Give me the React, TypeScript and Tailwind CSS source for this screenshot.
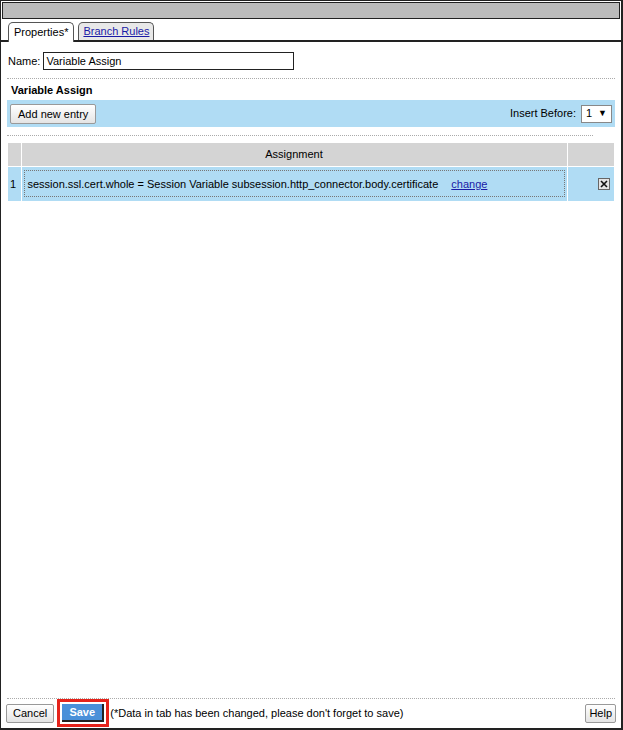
import React from "react";

const font = "font-['Liberation_Sans',Arial,sans-serif]";

const Tabs = () => (
  <div className="flex items-end pl-[4px] pr-[16px] border-b-2 border-[#222] mt-[3px] h-[20px]">
    <div className="ml-[3px] h-[20px] px-[5px] border border-b-0 border-[#555] rounded-t-[5px] bg-white leading-[18px] text-black relative top-[2px]">
      Properties*
    </div>
    <div className="ml-[4px] h-[18px] px-[4px] border border-b-0 border-[#555] rounded-t-[5px] bg-[#e8e8e8] leading-[17px]">
      <a className="text-[#1a1aa6] underline">Branch Rules</a>
    </div>
  </div>
);

const Dots = ({ w = "mx-[6px]" }: { w?: string }) => (
  <div className={`${w} border-t border-dotted border-[#aaa]`} />
);

const btn =
  "border border-[#999] rounded-[2px] bg-gradient-to-b from-white to-[#e4e4e4]";

export default function App() {
  return (
    <div className={`w-[623px] h-[730px] bg-white ${font} text-[11px] text-black`}>
      <div className="w-full h-full border-[2px] border-[#222] border-t-[1px] border-l-[1px] flex flex-col">
        <div className="h-[17px] mx-px mt-px bg-[#bcbcbc] border border-[#222]" />
        <Tabs />

        <div className="flex items-center gap-[3px] px-[7px] mt-[10px] h-[18px]">
          <span>Name:</span>
          <div className="w-[251px] h-[18px] border border-[#222] px-[2px] leading-[16px]">
            Variable Assign
          </div>
        </div>

        <div className="mt-[8px]">
          <Dots />
        </div>

        <div className="px-[10px] mt-[3px] font-bold leading-[16px]">Variable Assign</div>

        <div className="mx-[6px] mt-[2px] h-[27px] bg-[#b0dcf4] flex items-center px-[3px]">
          <button className={`h-[20px] px-[7px] leading-[18px] ${btn}`}>Add new entry</button>
          <span className="ml-auto">Insert Before:</span>
          <div className="ml-[5px] h-[18px] w-[31px] bg-white border border-[#888] flex items-center justify-between px-[4px]">
            <span>1</span>
            <span className="text-[9px]">▼</span>
          </div>
        </div>

        <div className="mt-[8px]">
          <Dots w="ml-[6px] mr-[28px]" />
        </div>

        <table className="mx-[7px] mt-[7px] w-[606px] border-collapse">
          <thead>
            <tr className="bg-[#d4d4d4] h-[23px]">
              <th className="w-[13px] border-r border-white" />
              <th className="font-normal border-r border-white">Assignment</th>
              <th className="w-[47px]" />
            </tr>
          </thead>
          <tbody>
            <tr className="bg-[#b0dcf4] h-[35px] border-t border-white">
              <td className="border-r border-white pl-[2px]">1</td>
              <td className="border-r border-white px-[2px]">
                <div className="border border-dotted border-[#777] h-[27px] flex items-center px-[3px]">
                  <span className="whitespace-nowrap">
                    session.ssl.cert.whole = Session Variable subsession.http_connector.body.certificate
                  </span>
                  <a className="ml-[13px] text-[#1a1aa6] underline">change</a>
                </div>
              </td>
              <td>
                <div className="ml-auto mr-[4px] w-[12px] h-[12px] border border-[#666] bg-[#e4e4e4] flex items-center justify-center">
                  <svg width="8" height="8" viewBox="0 0 8 8">
                    <path d="M1 1L7 7M7 1L1 7" stroke="#111" strokeWidth="1.6" />
                  </svg>
                </div>
              </td>
            </tr>
          </tbody>
        </table>

        <div className="flex-1" />
        <Dots />
        <div className="flex items-center px-[5px] h-[28px] mb-[1px]">
          <button className={`h-[19px] px-[6px] leading-[17px] ${btn}`}>Cancel</button>
          <div className="ml-[3px] border-[3px] border-[#e5231b] p-[2px]">
            <button className="h-[18px] w-[42px] bg-[#4a90d9] border-b-2 border-r-2 border-[#222] text-white font-bold leading-[15px]">
              Save
            </button>
          </div>
          <span className="ml-[1px]">(*Data in tab has been changed, please don't forget to save)</span>
          <button className={`ml-auto h-[19px] px-[3px] leading-[17px] ${btn}`}>Help</button>
        </div>
      </div>
    </div>
  );
}
